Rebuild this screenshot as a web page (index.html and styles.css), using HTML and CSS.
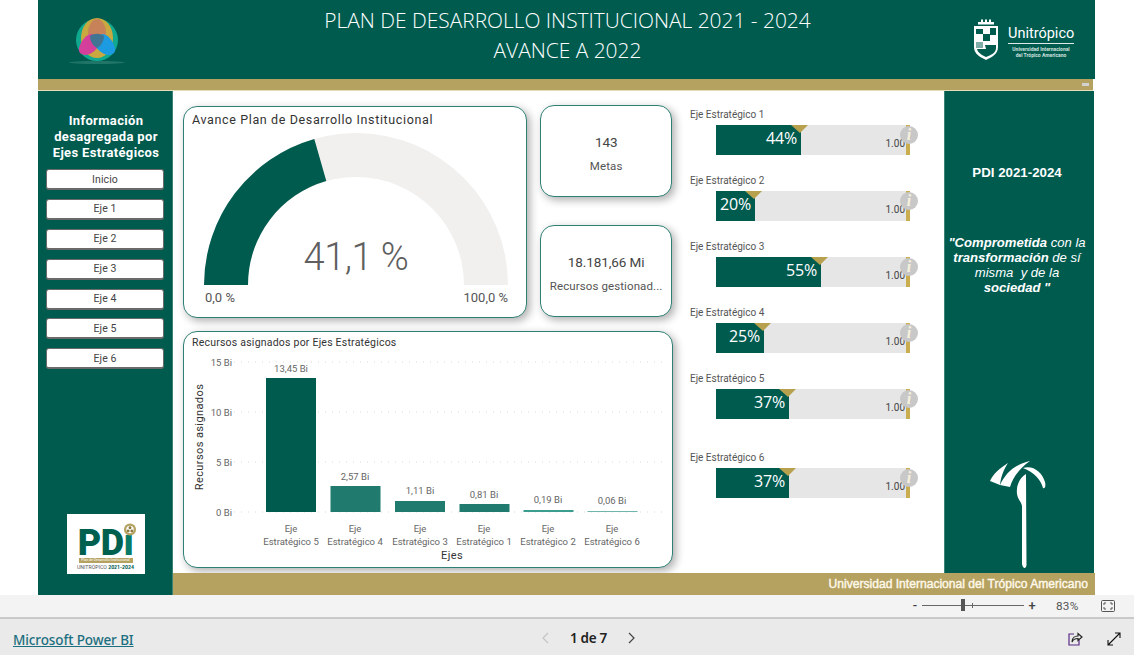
FILE: index.html
```html
<!DOCTYPE html>
<html lang="es">
<head>
<meta charset="utf-8">
<title>Plan de Desarrollo Institucional</title>
<link rel="stylesheet" href="styles.css">
</head>
<body>
<div class="report">
  <header class="top">
    <svg class="logo-pdi" viewBox="0 0 60 60" width="60" height="60">
      <ellipse cx="29" cy="51.500" rx="28" ry="1.500" fill="#2f8074" opacity=".7"/>
      <circle cx="29" cy="29" r="21" fill="#10a98f"/>
      <ellipse cx="29" cy="27" rx="16" ry="20" fill="#c9a83f"/>
      <path d="M29 8c5 0 9 7 9 14 0 4-1 7-2 9H22c-1-2-2-5-2-9 0-7 4-14 9-14z" fill="#c7825a"/>
      <path d="M24 23c-6 0-11 7-13 14-1 5 3 7 7 7 6-1 11-5 14-12z" fill="#d43f9c"/>
      <path d="M34 23c6 0 11 7 13 14 1 5-3 7-7 7-6-1-11-5-14-12z" fill="#1d9be2"/>
      <path d="M22 25c4-3 10-3 14 0 0 5-3 10-7 12-4-2-7-7-7-12z" fill="#3f7593"/>
    </svg>
    <h1 class="title">PLAN DE DESARROLLO INSTITUCIONAL 2021 - 2024<br>AVANCE A 2022</h1>
    <div class="brand">
      <svg class="shield" viewBox="0 0 26 44" width="26" height="44">
        <g fill="#fff">
          <rect x="5" y="3" width="16" height="2.500"/><rect x="8" y="0.500" width="2" height="3"/><rect x="12" y="0.500" width="2" height="3"/><rect x="16" y="0.500" width="2" height="3"/>
          <path d="M1 7h24v21c0 7-6 10-12 13C7 38 1 35 1 28z"/>
        </g>
        <g fill="#005b4f">
          <rect x="3" y="10" width="7" height="5"/><rect x="10" y="15" width="7" height="7"/><rect x="3" y="23" width="7" height="6" opacity=".5"/>
          <path d="M17 9h6v7h-6zM12 26h11v3c0 5-5 7-10 9-4-2-8-4-9-8h9z"/>
        </g>
      </svg>
      <div class="brand-text">
        <div class="brand-name">Unitrópico</div>
        <div class="brand-sub">Universidad Internacional<br>del Trópico Americano</div>
      </div>
    </div>
  </header>
  <div class="goldbar"><span class="goldbar-mark"></span></div>
  <div class="body">
    <aside class="side">
      <h2 class="side-title">Información desagregada por Ejes Estratégicos</h2>
      <nav class="side-nav">
        <a class="side-btn">Inicio</a>
        <a class="side-btn">Eje 1</a>
        <a class="side-btn">Eje 2</a>
        <a class="side-btn">Eje 3</a>
        <a class="side-btn">Eje 4</a>
        <a class="side-btn">Eje 5</a>
        <a class="side-btn">Eje 6</a>
      </nav>
      <div class="pdi-box">
        <svg class="pdi-emblem" viewBox="0 0 14 14" width="14" height="13">
          <circle cx="7" cy="7" r="6.500" fill="#b5a160"/>
          <circle cx="7" cy="7" r="4" fill="#fff"/>
          <circle cx="7" cy="5" r="1.600" fill="#8a7a3e"/><circle cx="5" cy="8.500" r="1.600" fill="#8a7a3e"/><circle cx="9" cy="8.500" r="1.600" fill="#8a7a3e"/>
        </svg>
        <div class="pdi-word">PD<span class="pdi-i">ı</span></div>
        <div class="pdi-strip">Plan de Desarrollo Institucional</div>
        <div class="pdi-foot">UNITRÓPICO <b>2021-2024</b></div>
      </div>
    </aside>
    <div class="right">
      <div class="content">
        <main class="main">
          <div class="cards">
            <section class="card gauge-card">
              <h3 class="gauge-title">Avance Plan de Desarrollo Institucional</h3>
              <svg class="gauge" viewBox="0 0 344 190" width="344" height="190">
                <path d="M22 159A152 152 0 0 1 326 159H282A108 108 0 0 0 66 159Z" fill="#f1f0ee"/>
                <path d="M22 159A152 152 0 0 1 132.300 13L144.300 55A108 108 0 0 0 66 159Z" fill="#005b4f"/>
                <text class="g-value" x="174" y="144" text-anchor="middle">41,1 %</text>
                <text class="g-end" x="23" y="176">0,0 %</text>
                <text class="g-end" x="326" y="176" text-anchor="end">100,0 %</text>
              </svg>
            </section>
            <div class="kpis">
              <section class="card kpi">
                <div class="kpi-value">143</div>
                <div class="kpi-label">Metas</div>
              </section>
              <section class="card kpi">
                <div class="kpi-value">18.181,66 Mi</div>
                <div class="kpi-label">Recursos gestionad...</div>
              </section>
            </div>
          </div>
          <section class="card bars-card">
            <h3 class="bars-title">Recursos asignados por Ejes Estratégicos</h3>
            <svg class="bars" viewBox="0 0 487 222" width="487" height="222">
              <g class="grid-lines">
                <line x1="50" x2="482" y1="17" y2="17"/>
                <line x1="50" x2="482" y1="67" y2="67"/>
                <line x1="50" x2="482" y1="117" y2="117"/>
                <line x1="50" x2="482" y1="167" y2="167"/>
              </g>
              <g class="axis-y" text-anchor="end">
                <text x="48" y="21">15 Bi</text>
                <text x="48" y="71">10 Bi</text>
                <text x="48" y="121">5 Bi</text>
                <text x="48" y="171">0 Bi</text>
              </g>
              <text class="axis-title" transform="translate(19 92) rotate(-90)" text-anchor="middle">Recursos asignados</text>
              <rect x="82" y="33" width="50" height="134" fill="#005b4f"/>
              <rect x="146.500" y="141" width="50" height="26" fill="#217a6e"/>
              <rect x="211" y="156" width="50" height="11" fill="#217a6e"/>
              <rect x="275.500" y="159" width="50" height="8" fill="#217a6e"/>
              <rect x="339.500" y="165" width="50" height="2" fill="#3b9d90"/>
              <rect x="403.500" y="166" width="50" height="1" fill="#6fb5ab"/>
              <g class="bar-val" text-anchor="middle">
                <text x="107" y="27">13,45 Bi</text>
                <text x="171" y="135">2,57 Bi</text>
                <text x="236" y="149">1,11 Bi</text>
                <text x="300" y="153">0,81 Bi</text>
                <text x="364" y="158">0,19 Bi</text>
                <text x="428" y="159">0,06 Bi</text>
              </g>
              <g class="axis-x" text-anchor="middle">
                <text x="107" y="187">Eje</text><text x="107" y="200">Estratégico 5</text>
                <text x="171" y="187">Eje</text><text x="171" y="200">Estratégico 4</text>
                <text x="236" y="187">Eje</text><text x="236" y="200">Estratégico 3</text>
                <text x="300" y="187">Eje</text><text x="300" y="200">Estratégico 1</text>
                <text x="364" y="187">Eje</text><text x="364" y="200">Estratégico 2</text>
                <text x="428" y="187">Eje</text><text x="428" y="200">Estratégico 6</text>
              </g>
              <text class="axis-title" x="268" y="214" text-anchor="middle">Ejes</text>
            </svg>
          </section>
        </main>
        <div class="bullets">
          <div class="bullet">
            <div class="bullet-label">Eje Estratégico 1</div>
            <div class="bullet-track"><div class="bullet-fill" style="width:85px"><span class="bullet-pct">44%</span><i class="bullet-tri"></i></div><span class="bullet-max">1.00</span><i class="bullet-target"></i><i class="bullet-info">i</i></div>
          </div>
          <div class="bullet">
            <div class="bullet-label">Eje Estratégico 2</div>
            <div class="bullet-track"><div class="bullet-fill" style="width:39px"><span class="bullet-pct">20%</span><i class="bullet-tri"></i></div><span class="bullet-max">1.00</span><i class="bullet-target"></i><i class="bullet-info">i</i></div>
          </div>
          <div class="bullet">
            <div class="bullet-label">Eje Estratégico 3</div>
            <div class="bullet-track"><div class="bullet-fill" style="width:105px"><span class="bullet-pct">55%</span><i class="bullet-tri"></i></div><span class="bullet-max">1.00</span><i class="bullet-target"></i><i class="bullet-info">i</i></div>
          </div>
          <div class="bullet">
            <div class="bullet-label">Eje Estratégico 4</div>
            <div class="bullet-track"><div class="bullet-fill" style="width:48px"><span class="bullet-pct">25%</span><i class="bullet-tri"></i></div><span class="bullet-max">1.00</span><i class="bullet-target"></i><i class="bullet-info">i</i></div>
          </div>
          <div class="bullet">
            <div class="bullet-label">Eje Estratégico 5</div>
            <div class="bullet-track"><div class="bullet-fill" style="width:73px"><span class="bullet-pct">37%</span><i class="bullet-tri"></i></div><span class="bullet-max">1.00</span><i class="bullet-target"></i><i class="bullet-info">i</i></div>
          </div>
          <div class="bullet bullet-last">
            <div class="bullet-label">Eje Estratégico 6</div>
            <div class="bullet-track"><div class="bullet-fill" style="width:73px"><span class="bullet-pct">37%</span><i class="bullet-tri"></i></div><span class="bullet-max">1.00</span><i class="bullet-target"></i><i class="bullet-info">i</i></div>
          </div>
        </div>
        <aside class="quote-panel">
          <div class="quote-head">PDI 2021-2024</div>
          <p class="quote"><b>"Comprometida</b> con la <b>transformación</b> de sí misma&nbsp; y de la <b>sociedad "</b></p>
          <svg class="palm" viewBox="0 0 56 108" width="56" height="108">
            <path fill="#fff" d="M18 2C10 7 3 13 0 20L10 24C11 15 14 8 18 2Z"/>
            <path fill="#fff" d="M40 0C26 3 16 11 10 24L20 26C23 16 30 7 40 0Z"/>
            <path fill="#fff" d="M33 7C43 4 52 11 55 21C56 25 55 28 53 27C51 19 44 11 33 7Z"/>
            <path fill="#fff" d="M36 13C29 17 26 26 27 33C28 39 31 40 32 45V103C33 108 36 108 36.500 104Z"/>
          </svg>
        </aside>
      </div>
      <div class="goldfoot">Universidad Internacional del Trópico Americano</div>
    </div>
  </div>
</div>
<div class="zoombar">
  <span class="z-sign z-minus">-</span>
  <span class="z-slider"><i class="z-thumb"></i><i class="z-tick"></i></span>
  <span class="z-sign">+</span>
  <span class="z-pct">83%</span>
  <svg class="z-fit" viewBox="0 0 14 12" width="14" height="12"><rect x=".5" y=".5" width="13" height="11" rx="1" fill="none" stroke="#555"/><path d="M3 5V3h2M9 3h2v2M11 7v2H9M5 9H3V7" fill="none" stroke="#555"/></svg>
</div>
<footer class="pbi">
  <a class="pbi-link">Microsoft Power BI</a>
  <div class="pager">
    <svg class="pager-arrow" viewBox="0 0 7 12" width="7" height="12"><path d="M6 1 1 6l5 5" fill="none" stroke="#c4c4c4" stroke-width="1.200"/></svg>
    <span class="pager-text">1 de 7</span>
    <svg class="pager-arrow" viewBox="0 0 7 12" width="7" height="12"><path d="M1 1l5 5-5 5" fill="none" stroke="#444" stroke-width="1.200"/></svg>
  </div>
  <div class="pbi-actions">
    <svg viewBox="0 0 16 16" width="16" height="16"><path d="M7 3H2v11h10V9" fill="none" stroke="#5b2a86" stroke-width="1.200"/><path d="M5 11c0-4 3-6 6-6V2.500L15 6l-4 3.500V7.500c-3 0-5 1-6 3.500z" fill="none" stroke="#222" stroke-width="1.200"/></svg>
    <svg viewBox="0 0 14 14" width="14" height="14"><path d="M1 13 13 1M8 1h5v5M1 8v5h5" fill="none" stroke="#111" stroke-width="1.100"/></svg>
  </div>
</footer>
</body>
</html>
```
FILE: styles.css
```css
* { box-sizing: border-box; }
html, body { margin: 0; padding: 0; }
body { width: 1134px; height: 655px; overflow: hidden; background: #fff; font-family: "Roboto", "Liberation Sans", sans-serif; color: #333; }
h1, h2, h3, p { margin: 0; font-weight: normal; }
i { font-style: normal; }

.report { width: 1057px; height: 595px; margin-left: 38px; display: flex; flex-direction: column; }

.top { height: 79px; background: #005b4f; display: flex; align-items: center; position: relative; }
.logo-pdi { margin-left: 30px; margin-top: 3px; flex: none; }
.title { flex: 1; text-align: center; color: #fff; font-family: "Open Sans", sans-serif; font-weight: 300; font-size: 20.900px; line-height: 30px; padding-left: 34px; margin-top: -9px; }
.brand { width: 122px; flex: none; display: flex; align-items: center; gap: 9px; margin-top: 3px; }
.shield { flex: none; }
.brand-text { color: #fff; width: 66px; }
.brand-name { font-size: 14.500px; font-weight: 400; line-height: 18px; border-bottom: 1px solid #dfeae8; white-space: nowrap; }
.brand-sub { font-size: 5px; line-height: 6px; text-align: center; padding-top: 2px; white-space: nowrap; font-weight: 700; color: #cfe0dd; }

.goldbar { height: 12px; width: 1055px; background: #b5a160; border-bottom: 1px solid #e5dcbc; display: flex; align-items: center; justify-content: flex-end; padding-right: 4px; }
.goldbar-mark { width: 7px; height: 3px; background: #d2d2d2; }

.body { flex: 1; display: flex; min-height: 0; }
.side { width: 135px; flex: none; background: #005b4f; display: flex; flex-direction: column; align-items: center; padding-top: 22px; border-right: 1px solid #3d8277; }
.side-title { color: #fff; font-size: 13px; font-weight: 700; line-height: 16px; text-align: center; letter-spacing: .35px; width: 122px; margin-left: 2px; }
.side-nav { display: flex; flex-direction: column; gap: 8.900px; margin-top: 8px; }
.side-btn { width: 118px; height: 21px; background: #fff; border: 1px solid #6a6a6a; border-bottom-width: 2px; border-radius: 3px; display: flex; align-items: center; justify-content: center; font-size: 10.500px; color: #444; letter-spacing: .1px; }

.pdi-box { width: 78px; height: 60px; margin-top: auto; margin-bottom: 21px; margin-left: 1px; background: #fff; display: flex; flex-direction: column; align-items: center; padding-top: 14px; position: relative; }
.pdi-emblem { position: absolute; right: 8px; top: 9px; }
.pdi-word { font-size: 36px; line-height: 30px; font-weight: 900; color: #006050; letter-spacing: -.5px; font-family: "Roboto", sans-serif; }
.pdi-i { color: #0a7a68; }
.pdi-strip { font-size: 3.500px; line-height: 5px; background: #b5a160; color: #fff; width: 54px; text-align: center; white-space: nowrap; overflow: hidden; }
.pdi-foot { font-size: 5.200px; line-height: 7px; color: #555; white-space: nowrap; margin-top: 1px; }
.pdi-foot b { color: #005b4f; }

.right { flex: 1; display: flex; flex-direction: column; min-width: 0; }
.content { flex: 1; display: flex; min-height: 0; }
.main { width: 499px; flex: none; padding: 15px 0 0 10px; display: flex; flex-direction: column; gap: 13px; }
.cards { display: flex; gap: 13px; }
.card { background: #fff; border: 1px solid #2f8074; border-radius: 14px; box-shadow: 3px 3px 9px rgba(0,0,0,.32); }

.gauge-card { width: 345px; height: 212px; }
.gauge-title { font-size: 12.500px; letter-spacing: .63px; color: #333; line-height: 16px; padding: 5px 0 0 8px; }
.gauge { display: block; margin: -2px 0 0 -2px; }
.g-value { font-size: 38px; font-weight: 300; fill: #5f5f5f; font-family: "Roboto", sans-serif; letter-spacing: -.5px; }
.g-end { font-size: 13px; fill: #555; }

.kpis { width: 132px; height: 212px; margin-top: -1px; display: flex; flex-direction: column; justify-content: space-between; }
.kpi { height: 92px; display: flex; flex-direction: column; align-items: center; justify-content: center; gap: 7px; padding-top: 5px; }
.kpi-value { font-size: 13.500px; font-weight: 400; color: #444; line-height: 18px; letter-spacing: -.1px; }
.kpi-label { font-size: 11.500px; color: #555; line-height: 16px; letter-spacing: .1px; }

.bars-card { width: 490px; height: 237px; }
.bars-title { font-size: 10.500px; letter-spacing: .22px; color: #333; line-height: 13px; padding: 4px 0 0 8px; }
.bars { display: block; margin-top: -4px; }
.grid-lines line { stroke: #d9d9d9; stroke-width: 1; stroke-dasharray: 1 6; }
.axis-y text { font-size: 9.500px; fill: #666; }
.axis-x text { font-size: 9.500px; fill: #666; }
.bar-val text { font-size: 9.500px; fill: #666; }
.axis-title { font-size: 11px; fill: #333; letter-spacing: .4px; }

.bullets { width: 272px; flex: none; padding: 17px 0 0 18px; display: flex; flex-direction: column; gap: 19px; }
.bullet { height: 47px; }
.bullet-last { margin-top: 13px; }
.bullet-label { font-size: 10px; line-height: 14px; color: #555; margin-bottom: 3px; }
.bullet-track { position: relative; width: 190px; height: 30px; margin-left: 26px; background: #e6e6e6; }
.bullet-fill { height: 100%; background: #005b4f; position: relative; display: flex; align-items: center; justify-content: flex-end; padding-right: 4px; }
.bullet-pct { color: #fff; font-size: 16px; font-weight: 400; font-family: "Open Sans", sans-serif; white-space: nowrap; margin-top: -5px; letter-spacing: -.2px; }
.bullet-tri { position: absolute; top: 0; right: -7px; border-left: 9px solid transparent; border-right: 8px solid transparent; border-top: 8px solid #b8a14e; }
.bullet-max { position: absolute; right: 1px; bottom: 5px; font-size: 10px; line-height: 12px; color: #444; }
.bullet-target { position: absolute; left: 190px; top: 0; width: 4px; height: 100%; background: #c9ad4f; }
.bullet-info { position: absolute; left: 184px; top: 1px; width: 18px; height: 18px; border-radius: 50%; background: #c8c8c8; color: #f6f1dd; font-family: "Liberation Serif", serif; font-style: italic; font-weight: 700; font-size: 16px; line-height: 18px; text-align: center; }

.quote-panel { width: 150px; flex: none; background: #005b4f; border-left: 1px solid #3d8277; display: flex; flex-direction: column; align-items: center; padding: 74px 5px 0 0; }
.quote-head { color: #fff; font-family: "Liberation Sans", sans-serif; font-weight: 700; font-size: 13.300px; line-height: 16px; }
.quote { color: #fff; font-family: "Liberation Sans", sans-serif; font-style: italic; font-size: 13.100px; line-height: 15px; text-align: center; margin-top: 54px; width: 142px; }
.palm { margin-top: auto; margin-bottom: 4px; margin-left: 2px; }

.goldfoot { height: 22px; background: #b5a160; color: #fff9ea; font-family: "Liberation Sans", sans-serif; font-size: 12.100px; -webkit-text-stroke: .4px #fff9ea; line-height: 22px; text-align: right; padding-right: 7px; }

.zoombar { height: 24px; background: #f3f3f3; border-bottom: 2px solid #c9c9c9; display: flex; align-items: center; justify-content: flex-end; color: #555; font-size: 12px; padding-right: 19px; padding-bottom: 1px; }
.z-sign { font-size: 13px; color: #444; width: 8px; text-align: center; font-weight: 500; }
.z-slider { position: relative; width: 102px; height: 1px; background: #666; margin: 0 4px 0 3px; }
.z-thumb { position: absolute; left: 39px; top: -6px; width: 4px; height: 12px; background: #555; }
.z-tick { position: absolute; left: 50px; top: -2px; width: 1px; height: 5px; background: #666; }
.z-pct { margin-left: 20px; width: 37px; font-size: 11.800px; letter-spacing: .2px; }
.z-fit { margin-left: 8px; }

.pbi { height: 37px; background: #eaeaea; position: relative; display: flex; align-items: center; justify-content: center; }
.pbi-link { position: absolute; left: 13px; top: 12px; font-family: "Noto Sans", sans-serif; font-size: 13.500px; font-weight: 500; line-height: 18px; color: #1c6f80; text-decoration: underline; letter-spacing: -.1px; }
.pager { display: flex; align-items: center; gap: 21px; margin-left: 43px; }
.pager-text { font-family: "Noto Sans", sans-serif; font-size: 13.500px; font-weight: 600; color: #222; letter-spacing: -.3px; }
.pbi-actions { position: absolute; right: 13px; top: 12px; display: flex; gap: 24px; align-items: center; }
```
